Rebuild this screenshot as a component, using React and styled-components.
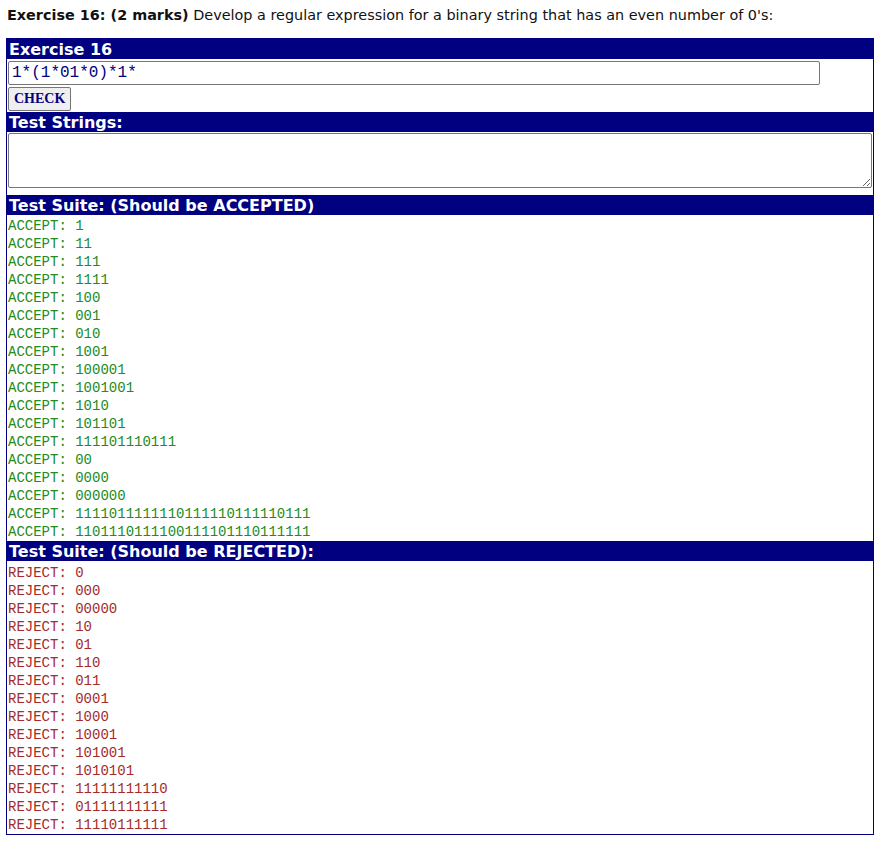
import React from 'react';
import styled, { createGlobalStyle } from 'styled-components';

const GlobalStyle = createGlobalStyle`
  body {
    margin: 0;
    padding: 7px 6px 0 6px;
    background: #fff;
    font-family: "DejaVu Sans", Verdana, sans-serif;
  }
`;

const Intro = styled.p`
  margin: 0 0 0 1px;
  font-size: 14.4px;
  line-height: 16px;
  color: #111;
`;

const Box = styled.div`
  margin-top: 15px;
  width: 866px;
  border: 1px solid #000080;
`;

const Bar = styled.div`
  height: 20px;
  line-height: 21px;
  padding-left: 2px;
  background: #000080;
  color: #fff;
  font-family: "DejaVu Sans", Verdana, sans-serif;
  font-weight: bold;
  font-size: 16px;
  margin-top: ${p => p.$gap || 0}px;
`;

const Input = styled.input`
  display: block;
  box-sizing: border-box;
  margin: 2px 0 0 1px;
  width: 812px;
  height: 24px;
  padding: 0 3px;
  border: 1px solid #767676;
  border-radius: 2px;
  font-family: "Liberation Mono", "Courier New", monospace;
  font-size: 16px;
  color: #000080;
  outline: none;
`;

const Button = styled.button`
  display: block;
  box-sizing: border-box;
  margin: 2px 0 0 1px;
  height: 24px;
  padding: 0 5px;
  background: #efefef;
  border: 1px solid #767676;
  border-radius: 2px;
  font-family: "Liberation Serif", "Times New Roman", serif;
  font-weight: bold;
  font-size: 14px;
  color: #000080;
`;

const TextArea = styled.textarea`
  display: block;
  box-sizing: border-box;
  margin: 1px 1px 0 1px;
  width: 864px;
  height: 55px;
  border: 1px solid #767676;
  border-radius: 2px;
  font-family: "Liberation Mono", monospace;
  font-size: 13px;
  outline: none;
`;

const List = styled.div`
  padding: ${p => p.$top || 0}px 0 0 1px;
`;

const Line = styled.div`
  height: 18px;
  line-height: 18px;
  font-family: "Liberation Mono", "Courier New", monospace;
  font-size: 14px;
  white-space: pre;
  color: ${p => (p.$ok ? '#228b22' : '#a52a2a')};
`;

const accepted = [
  '1', '11', '111', '1111', '100', '001', '010', '1001', '100001', '1001001',
  '1010', '101101', '111101110111', '00', '0000', '000000',
  '1111011111110111110111110111', '1101110111100111101110111111',
];

const rejected = [
  '0', '000', '00000', '10', '01', '110', '011', '0001', '1000', '10001',
  '101001', '1010101', '11111111110', '01111111111', '11110111111',
];

export default function App() {
  return (
    <>
      <GlobalStyle />
      <Intro>
        <b>Exercise 16: (2 marks)</b> Develop a regular expression for a binary string that has an even number of 0's:
      </Intro>
      <Box>
        <Bar>Exercise 16</Bar>
        <Input defaultValue="1*(1*01*0)*1*" />
        <Button>CHECK</Button>
        <Bar $gap={1}>Test Strings:</Bar>
        <TextArea />
        <Bar $gap={7}>Test Suite: (Should be ACCEPTED)</Bar>
        <List $top={2}>
          {accepted.map((s, i) => (
            <Line key={i} $ok>ACCEPT: {s}</Line>
          ))}
        </List>
        <Bar>Test Suite: (Should be REJECTED):</Bar>
        <List $top={3}>
          {rejected.map((s, i) => (
            <Line key={i}>REJECT: {s}</Line>
          ))}
        </List>
      </Box>
    </>
  );
}
